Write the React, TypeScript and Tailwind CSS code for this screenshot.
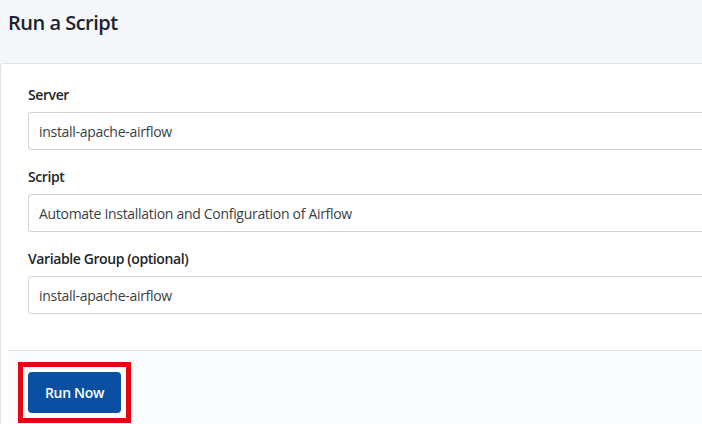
import React from 'react';

const fields = [
  { label: 'Server', value: 'install-apache-airflow' },
  { label: 'Script', value: 'Automate Installation and Configuration of Airflow' },
  { label: 'Variable Group (optional)', value: 'install-apache-airflow' },
];

export default function App() {
  return (
    <div className="w-[702px] h-[424px] overflow-hidden bg-[#f4f6fa] font-['Open_Sans',sans-serif] text-[#212529]">
      {/* Page header */}
      <div className="h-[63px] px-2 pt-[11px]">
        <h1 className="text-[20px] leading-[24px] font-semibold tracking-[-0.5px] text-[#1b2230]">Run a Script</h1>
      </div>

      {/* Card */}
      <div className="bg-white border-t border-l border-[#dfe3e8] rounded-tl-[4px] h-[361px] flex flex-col">
        <div className="pl-[27px] pt-[20px] pb-[36px] flex flex-col gap-4">
          {fields.map((f) => (
            <div key={f.label} className="flex flex-col">
              <label className="text-[14px] leading-[21px] font-semibold tracking-[-0.4px] mb-[7px]">{f.label}</label>
              <div className="h-[38px] border border-[#ced4da] border-r-0 rounded-l-[4px] flex items-center pl-[10px] text-[14px] tracking-[-0.3px] text-[#3a3f44]">
                {f.value}
              </div>
            </div>
          ))}
        </div>

        {/* Footer */}
        <div className="ml-[7px] flex-1 border-t border-[#dfe3e8] bg-[#fafbfd] pl-[10px] pt-[11px]">
          <div className="inline-flex border-[5px] border-[#e30613] bg-white p-[5px]">
            <button className="h-[41px] w-[93px] rounded-[4px] bg-[#0b4fa3] text-white text-[14px] font-semibold tracking-[-0.3px]">
              Run Now
            </button>
          </div>
        </div>
      </div>
    </div>
  );
}
